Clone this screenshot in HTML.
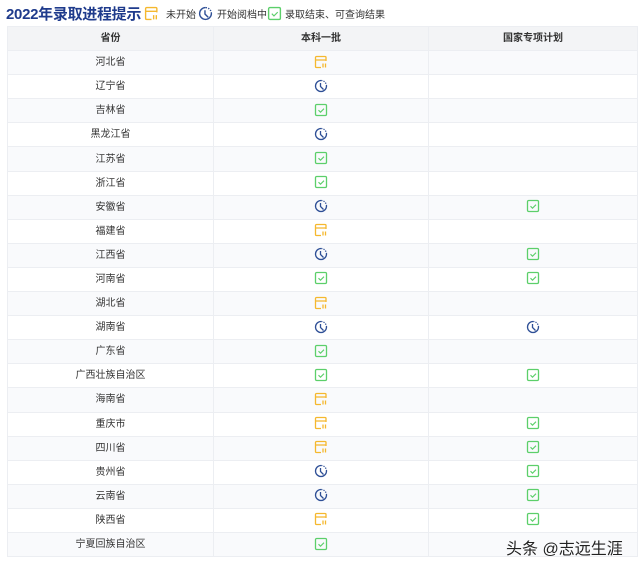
<!DOCTYPE html>
<html><head><meta charset="utf-8"><style>
body{margin:0;width:640px;height:568px;background:#fff;font-family:"Liberation Sans","Noto Sans CJK SC",sans-serif;position:relative;overflow:hidden}
.t{position:absolute;left:6px;top:3px;font-size:15px;font-weight:bold;color:#1f3b8c;white-space:nowrap;letter-spacing:-0.3px}
.lg{position:absolute;font-size:10px;color:#333;line-height:14px;white-space:nowrap}
table{position:absolute;left:7px;top:26px;border-collapse:collapse;width:631px;font-size:10px;color:#333;table-layout:fixed}
td,th{border:1.5px solid #eceef2;text-align:center;padding:0;line-height:12px;vertical-align:middle}
td:first-child{padding-top:1px}
tr{height:24.1px}
th{background:#f3f4f6;font-weight:bold}
tr:nth-child(even) td{background:#f9fafc}
td svg{display:block;margin:-2px auto 0}
.wm{position:absolute;left:506px;top:535px;font-size:16px;color:#222;text-shadow:0 0 2px #fff;white-space:nowrap}
</style></head><body>
<svg width="0" height="0" style="position:absolute"><defs>
<symbol id="y" viewBox="0 0 14 14"><path d="M7 12.5H2.5a1 1 0 0 1-1-1V2.5a1 1 0 0 1 1-1h8.5a1 1 0 0 1 1 1V6M1.5 5H12" fill="none" stroke="#f5b82e" stroke-width="1.3"/><path d="M9 8.5v4M11.5 8.5v4" stroke="#f5b82e" stroke-width="1.3"/></symbol>
<symbol id="c" viewBox="0 0 14 14"><path d="M7 1.5A5.5 5.5 0 1 0 12.5 7" fill="none" stroke="#2e4f96" stroke-width="1.3"/><path d="M12.5 7A5.5 5.5 0 0 0 7 1.5" fill="none" stroke="#2e4f96" stroke-width="1.3" stroke-dasharray="1.2 1.2"/><path d="M6.5 4v3.5l3 3" fill="none" stroke="#2e4f96" stroke-width="1.3"/></symbol>
<symbol id="g" viewBox="0 0 14 14"><rect x="1.5" y="1.5" width="11" height="11" rx="1.2" fill="none" stroke="#5ccf6a" stroke-width="1.3"/><path d="M4.5 7.2l2 2 3.5-3.5" fill="none" stroke="#5ccf6a" stroke-width="1.1"/></symbol>
</defs></svg>
<div class="t">2022年录取进程提示</div>
<svg style="position:absolute;left:144px;top:6px" width="15" height="15"><use href="#y"/></svg>
<div class="lg" style="left:166px;top:9px">未开始</div>
<svg style="position:absolute;left:198px;top:6px" width="15" height="15"><use href="#c"/></svg>
<div class="lg" style="left:217px;top:9px">开始阅档中</div>
<svg style="position:absolute;left:267px;top:6px" width="15" height="15"><use href="#g"/></svg>
<div class="lg" style="left:285px;top:9px">录取结束、可查询结果</div>
<table>
<colgroup><col style="width:206px"><col style="width:215px"><col></colgroup>
<tr><th>省份</th><th>本科一批</th><th>国家专项计划</th></tr>
<tr><td>河北省</td><td><svg width="14" height="14"><use href="#y"/></svg></td><td></td></tr>
<tr><td>辽宁省</td><td><svg width="14" height="14"><use href="#c"/></svg></td><td></td></tr>
<tr><td>吉林省</td><td><svg width="14" height="14"><use href="#g"/></svg></td><td></td></tr>
<tr><td>黑龙江省</td><td><svg width="14" height="14"><use href="#c"/></svg></td><td></td></tr>
<tr><td>江苏省</td><td><svg width="14" height="14"><use href="#g"/></svg></td><td></td></tr>
<tr><td>浙江省</td><td><svg width="14" height="14"><use href="#g"/></svg></td><td></td></tr>
<tr><td>安徽省</td><td><svg width="14" height="14"><use href="#c"/></svg></td><td><svg width="14" height="14"><use href="#g"/></svg></td></tr>
<tr><td>福建省</td><td><svg width="14" height="14"><use href="#y"/></svg></td><td></td></tr>
<tr><td>江西省</td><td><svg width="14" height="14"><use href="#c"/></svg></td><td><svg width="14" height="14"><use href="#g"/></svg></td></tr>
<tr><td>河南省</td><td><svg width="14" height="14"><use href="#g"/></svg></td><td><svg width="14" height="14"><use href="#g"/></svg></td></tr>
<tr><td>湖北省</td><td><svg width="14" height="14"><use href="#y"/></svg></td><td></td></tr>
<tr><td>湖南省</td><td><svg width="14" height="14"><use href="#c"/></svg></td><td><svg width="14" height="14"><use href="#c"/></svg></td></tr>
<tr><td>广东省</td><td><svg width="14" height="14"><use href="#g"/></svg></td><td></td></tr>
<tr><td>广西壮族自治区</td><td><svg width="14" height="14"><use href="#g"/></svg></td><td><svg width="14" height="14"><use href="#g"/></svg></td></tr>
<tr><td>海南省</td><td><svg width="14" height="14"><use href="#y"/></svg></td><td></td></tr>
<tr><td>重庆市</td><td><svg width="14" height="14"><use href="#y"/></svg></td><td><svg width="14" height="14"><use href="#g"/></svg></td></tr>
<tr><td>四川省</td><td><svg width="14" height="14"><use href="#y"/></svg></td><td><svg width="14" height="14"><use href="#g"/></svg></td></tr>
<tr><td>贵州省</td><td><svg width="14" height="14"><use href="#c"/></svg></td><td><svg width="14" height="14"><use href="#g"/></svg></td></tr>
<tr><td>云南省</td><td><svg width="14" height="14"><use href="#c"/></svg></td><td><svg width="14" height="14"><use href="#g"/></svg></td></tr>
<tr><td>陕西省</td><td><svg width="14" height="14"><use href="#y"/></svg></td><td><svg width="14" height="14"><use href="#g"/></svg></td></tr>
<tr><td>宁夏回族自治区</td><td><svg width="14" height="14"><use href="#g"/></svg></td><td></td></tr>
</table>
<div class="wm">头条 @志远生涯</div>
</body></html>
